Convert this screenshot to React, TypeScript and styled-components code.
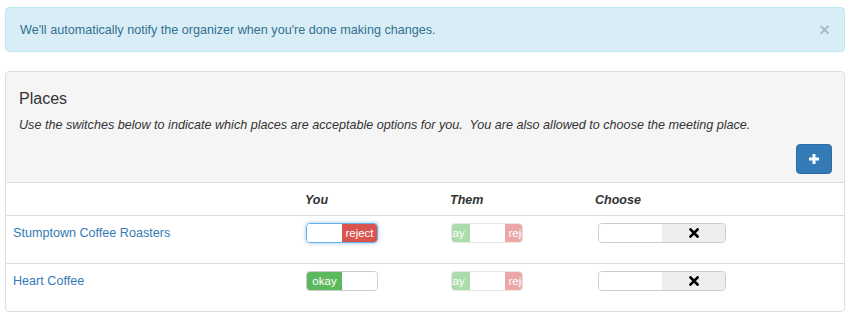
import React from "react";
import styled, { createGlobalStyle, css } from "styled-components";

const GlobalStyle = createGlobalStyle`
  html, body {
    margin: 0;
    padding: 0;
    background: #fff;
  }
  body {
    font-family: "Liberation Sans", Arial, sans-serif;
    font-size: 12.6px;
    line-height: 18px;
    color: #333;
  }
`;

const Page = styled.div`
  padding: 7px 5px 0 5px;
`;

const Alert = styled.div`
  display: flex;
  align-items: center;
  justify-content: space-between;
  height: 45px;
  box-sizing: border-box;
  padding: 0 14px;
  background: #d9edf7;
  border: 1px solid #bce8f1;
  border-radius: 4px;
  color: #31708f;
  font-size: 12.6px;
`;

const CloseButton = styled.button`
  border: 0;
  background: none;
  padding: 0;
  font-family: "Liberation Sans", Arial, sans-serif;
  font-size: 19px;
  font-weight: 700;
  line-height: 1;
  color: #000;
  opacity: 0.2;
  cursor: pointer;
`;

const Panel = styled.section`
  margin-top: 19px;
  border: 1px solid #ddd;
  border-radius: 4px;
  overflow: hidden;
  background: #fff;
`;

const PanelHeading = styled.div`
  background: #f5f5f5;
  border-bottom: 1px solid #ddd;
  padding: 17px 12px 8px 13px;
`;

const Title = styled.h4`
  margin: 0;
  font-size: 16px;
  line-height: 20px;
  font-weight: 500;
  color: #333;
`;

const Intro = styled.p`
  margin: 7px 0 0 0;
  font-style: italic;
  font-size: 12.6px;
  line-height: 18px;
  white-space: pre;
`;

const Toolbar = styled.div`
  display: flex;
  justify-content: flex-end;
  margin-top: 10px;
`;

const AddButton = styled.button`
  width: 36px;
  height: 30px;
  display: flex;
  align-items: center;
  justify-content: center;
  padding: 0;
  background: #337ab7;
  border: 1px solid #2e6da4;
  border-radius: 4px;
  cursor: pointer;
`;

const TableRow = styled.div<{ $head?: boolean }>`
  display: grid;
  grid-template-columns: 292px 145px 145px 1fr;
  height: ${({ $head }) => ($head ? "32px" : "48px")};
  box-sizing: border-box;
  ${({ $head }) =>
    !$head &&
    css`
      border-top: 1px solid #ddd;
    `}
`;

const HeadCell = styled.div`
  padding: 9px 0 0 7px;
  font-weight: 700;
  font-style: italic;
  font-size: 12.5px;
  line-height: 16px;
  color: #333;
`;

const Cell = styled.div`
  padding: 7px 0 0 7px;
`;

const PlaceLink = styled.a`
  display: inline-block;
  padding-top: 1px;
  color: #337ab7;
  text-decoration: none;
  font-size: 12.6px;
  line-height: 18px;
`;

const SwitchFrame = styled.div<{ $width: number; $focus?: boolean; $faded?: boolean; $offset?: number }>`
  display: inline-block;
  width: ${({ $width }) => $width}px;
  height: 20px;
  margin-left: ${({ $offset }) => $offset ?? 1}px;
  border: 1px solid ${({ $focus }) => ($focus ? "#66afe9" : "#ccc")};
  border-radius: 4px;
  overflow: hidden;
  box-sizing: border-box;
  opacity: ${({ $faded }) => ($faded ? 0.5 : 1)};
  ${({ $focus }) =>
    $focus &&
    css`
      box-shadow: 0 0 4px rgba(102, 175, 233, 0.7);
    `}
`;

const SwitchTrack = styled.div<{ $shift: number }>`
  display: flex;
  height: 100%;
  transform: translateX(${({ $shift }) => $shift}px);
`;

const tones = {
  okay: { bg: "#5cb85c", fg: "#fff" },
  reject: { bg: "#d9534f", fg: "#fff" },
  blank: { bg: "#fff", fg: "#333" },
  neutral: { bg: "#eee", fg: "#000" },
};

const SwitchPart = styled.span<{ $tone: keyof typeof tones; $size: number }>`
  flex: 0 0 ${({ $size }) => $size}px;
  display: flex;
  align-items: center;
  justify-content: center;
  overflow: hidden;
  background: ${({ $tone }) => tones[$tone].bg};
  color: ${({ $tone }) => tones[$tone].fg};
  font-size: 11.5px;
  line-height: 18px;
  white-space: nowrap;
`;

type State = "on" | "off" | "mixed";

const HALF = 35;

const YesNoSwitch: React.FC<{ state: State; focus?: boolean; faded?: boolean }> = ({
  state,
  focus,
  faded,
}) => {
  if (state === "mixed") {
    // indeterminate: half of each handle peeks out either side of the label
    return (
      <SwitchFrame $width={72} $focus={focus} $faded={faded}>
        <SwitchTrack $shift={-17}>
          <SwitchPart $tone="okay" $size={HALF}>okay</SwitchPart>
          <SwitchPart $tone="blank" $size={HALF} />
          <SwitchPart $tone="reject" $size={HALF}>reject</SwitchPart>
        </SwitchTrack>
      </SwitchFrame>
    );
  }
  return (
    <SwitchFrame $width={72} $focus={focus} $faded={faded}>
      <SwitchTrack $shift={0}>
        {state === "on" ? (
          <>
            <SwitchPart $tone="okay" $size={HALF}>okay</SwitchPart>
            <SwitchPart $tone="blank" $size={HALF} />
          </>
        ) : (
          <>
            <SwitchPart $tone="blank" $size={HALF} />
            <SwitchPart $tone="reject" $size={HALF}>reject</SwitchPart>
          </>
        )}
      </SwitchTrack>
    </SwitchFrame>
  );
};

const CrossIcon = () => (
  <svg width="10" height="10" viewBox="0 0 10 10">
    <path d="M1.5 1.5 L8.5 8.5 M8.5 1.5 L1.5 8.5" stroke="#000" strokeWidth="2.6" strokeLinecap="square" />
  </svg>
);

const ChooseSwitch: React.FC = () => (
  <SwitchFrame $width={128} $offset={3}>
    <SwitchTrack $shift={0}>
      <SwitchPart $tone="blank" $size={63} />
      <SwitchPart $tone="neutral" $size={63}>
        <CrossIcon />
      </SwitchPart>
    </SwitchTrack>
  </SwitchFrame>
);

const places = [
  { name: "Stumptown Coffee Roasters", you: "off" as State, focus: true },
  { name: "Heart Coffee", you: "on" as State, focus: false },
];

const App: React.FC = () => {
  return (
    <Page>
      <GlobalStyle />
      <Alert>
        <span>We'll automatically notify the organizer when you're done making changes.</span>
        <CloseButton aria-label="Close">×</CloseButton>
      </Alert>
      <Panel>
        <PanelHeading>
          <Title>Places</Title>
          <Intro>
            Use the switches below to indicate which places are acceptable options for you.  You are also allowed to choose the meeting place.
          </Intro>
          <Toolbar>
            <AddButton aria-label="Add place">
              <svg width="12" height="12" viewBox="0 0 12 12">
                <path d="M6 1 V11 M1 6 H11" stroke="#fff" strokeWidth="3" />
              </svg>
            </AddButton>
          </Toolbar>
        </PanelHeading>
        <TableRow $head>
          <HeadCell />
          <HeadCell>You</HeadCell>
          <HeadCell>Them</HeadCell>
          <HeadCell>Choose</HeadCell>
        </TableRow>
        {places.map((p) => (
          <TableRow key={p.name}>
            <Cell>
              <PlaceLink href="#">{p.name}</PlaceLink>
            </Cell>
            <Cell>
              <YesNoSwitch state={p.you} focus={p.focus} />
            </Cell>
            <Cell>
              <YesNoSwitch state="mixed" faded />
            </Cell>
            <Cell>
              <ChooseSwitch />
            </Cell>
          </TableRow>
        ))}
      </Panel>
    </Page>
  );
};

export default App;
